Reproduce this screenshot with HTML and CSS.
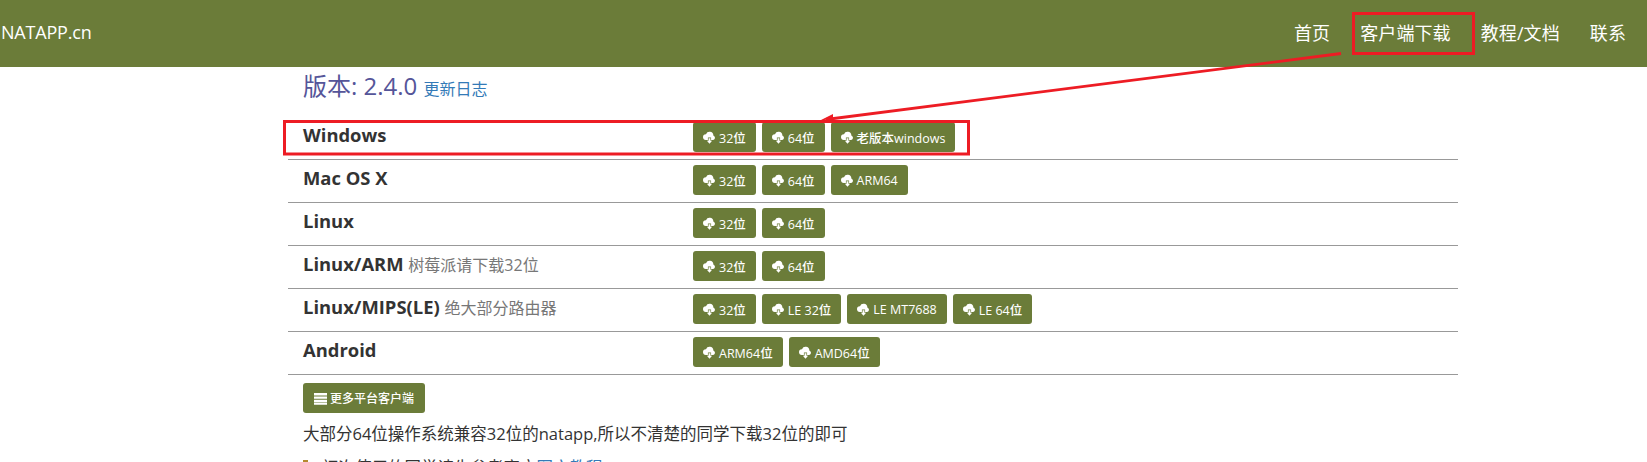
FILE: index.html
```html
<!DOCTYPE html>
<html lang="zh-CN">
<head>
<meta charset="utf-8">
<title>NATAPP.cn</title>
<link rel="stylesheet" href="styles.css">
</head>
<body>
<svg width="0" height="0" class="defs"><defs>
<symbol id="cloud" viewBox="0 0 14 14"><path d="M11.300 5a3 3 0 0 0-.1-.5A4.200 4.200 0 0 0 3.200 3.400 3.100 3.100 0 0 0 3 9.600h2.300V6.900h3.400v2.700h2.300a2.400 2.400 0 0 0 .3-4.600z"/><path d="M6 7.700h2v2.900h1.800L7 13.600 4.200 10.600H6z"/></symbol>
</defs></svg>
<nav class="navbar">
  <a class="brand">NATAPP.cn</a>
  <ul class="nav">
    <li>首页</li>
    <li>客户端下载</li>
    <li>教程/文档</li>
    <li>联系</li>
  </ul>
</nav>
<main class="container">
  <h2 class="version">版本: 2.4.0 <small>更新日志</small></h2>
  <div class="row">
    <h4>Windows</h4>
    <div class="btns">
      <a class="btn"><svg class="ico"><use href="#cloud"/></svg>32位</a>
      <a class="btn"><svg class="ico"><use href="#cloud"/></svg>64位</a>
      <a class="btn"><svg class="ico"><use href="#cloud"/></svg>老版本windows</a>
    </div>
  </div>
  <div class="row">
    <h4>Mac OS X</h4>
    <div class="btns">
      <a class="btn"><svg class="ico"><use href="#cloud"/></svg>32位</a>
      <a class="btn"><svg class="ico"><use href="#cloud"/></svg>64位</a>
      <a class="btn"><svg class="ico"><use href="#cloud"/></svg>ARM64</a>
    </div>
  </div>
  <div class="row">
    <h4>Linux</h4>
    <div class="btns">
      <a class="btn"><svg class="ico"><use href="#cloud"/></svg>32位</a>
      <a class="btn"><svg class="ico"><use href="#cloud"/></svg>64位</a>
    </div>
  </div>
  <div class="row">
    <h4>Linux/ARM <small>树莓派请下载32位</small></h4>
    <div class="btns">
      <a class="btn"><svg class="ico"><use href="#cloud"/></svg>32位</a>
      <a class="btn"><svg class="ico"><use href="#cloud"/></svg>64位</a>
    </div>
  </div>
  <div class="row">
    <h4>Linux/MIPS(LE) <small>绝大部分路由器</small></h4>
    <div class="btns">
      <a class="btn"><svg class="ico"><use href="#cloud"/></svg>32位</a>
      <a class="btn"><svg class="ico"><use href="#cloud"/></svg>LE 32位</a>
      <a class="btn"><svg class="ico"><use href="#cloud"/></svg>LE MT7688</a>
      <a class="btn"><svg class="ico"><use href="#cloud"/></svg>LE 64位</a>
    </div>
  </div>
  <div class="row">
    <h4>Android</h4>
    <div class="btns">
      <a class="btn"><svg class="ico"><use href="#cloud"/></svg>ARM64位</a>
      <a class="btn"><svg class="ico"><use href="#cloud"/></svg>AMD64位</a>
    </div>
  </div>
  <a class="btn more"><svg class="ico" viewBox="0 0 12 12"><path d="M0 1h12v2.200H0zM0 4.100h12v2.200H0zM0 7.200h12v2.200H0zM0 10h12v1.800H0z"/></svg>更多平台客户端</a>
  <p class="note">大部分64位操作系统兼容32位的natapp,所以不清楚的同学下载32位的即可</p>
  <p class="tip"><span class="bulb"></span>初次使用的同学请先参考官方<a>图文教程</a></p>
</main>
<svg class="marks" width="1647" height="462" viewBox="0 0 1647 462">
  <rect x="1353.500" y="13.500" width="120" height="40" fill="none" stroke="#ed1c24" stroke-width="3"/>
  <rect x="284.500" y="121.500" width="684" height="32.500" fill="none" stroke="#ed1c24" stroke-width="3"/>
  <path d="M1341 53.500 L826 119.500" stroke="#ed1c24" stroke-width="2.800" fill="none"/>
  <path d="M820 120.500 L833 114 L833 119z" fill="#ed1c24"/>
</svg>
</body>
</html>
```
FILE: styles.css
```css
* { box-sizing: border-box; }
html, body { height: 462px; overflow: hidden; }
body {
  margin: 0;
  position: relative;
  background: #fff;
  color: #333;
  font-family: "Open Sans", "Noto Sans CJK SC", sans-serif;
  font-size: 16px;
}
.defs { position: absolute; }
.navbar {
  height: 67px;
  background: #6b7c39;
  display: flex;
  align-items: center;
  justify-content: space-between;
  color: #fff;
  font-size: 18px;
  padding: 0 21px 0 1px;
}
.brand { letter-spacing: -0.2px; margin-top: -4px; }
.nav {
  display: flex;
  list-style: none;
  margin: -3px 0 0;
  padding: 0;
  gap: 30px;
  letter-spacing: 0.1px;
}
.container { width: 1170px; margin-left: 288px; }
.version {
  margin: 3px 0 0;
  padding-left: 15px;
  font-size: 24px;
  font-weight: 400;
  line-height: 32px;
  color: #555599;
}
.version small { font-size: 16px; color: #337ab7; }
.row {
  height: 43px;
  border-bottom: 1px solid #999;
  display: flex;
  padding-left: 15px;
}
.row:first-of-type { margin-top: 12px; }
h4 {
  width: 390px;
  margin: 0;
  font-size: 18.400px;
  font-weight: 700;
  line-height: 24px;
  color: #333;
  padding-top: 6px;
}
h4 small { font-size: 16px; font-weight: 400; color: #777; }
.btns { display: flex; gap: 6px; padding-top: 5px; }
.btn {
  display: inline-flex;
  align-items: center;
  height: 30px;
  padding: 0 10px;
  background: #6b7c39;
  color: #fff;
  font-size: 12.500px;
  font-weight: 500;
  border-radius: 3px;
  white-space: nowrap;
}
.ico { width: 13px; height: 13px; fill: #fff; margin-right: 3px; }
.more { margin: 8px 0 0 15px; font-size: 12px; padding: 0 11px; }
.more .ico { width: 13px; height: 13px; }
.note { margin: 10px 0 0 15px; font-size: 16.500px; line-height: 22px; }
.tip { margin: 12px 0 0 15px; font-size: 16.500px; line-height: 22px; }
.tip a { color: #337ab7; }
.bulb {
  display: inline-block;
  width: 5px;
  height: 14px;
  margin-right: 14px;
  background: #b5892e;
}
.marks { position: absolute; left: 0; top: 0; pointer-events: none; }
```
